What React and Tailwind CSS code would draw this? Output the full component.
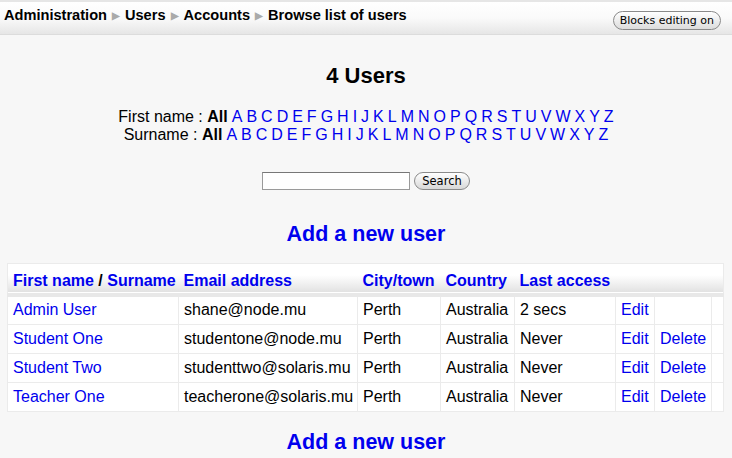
import React from 'react';

const letters = 'ABCDEFGHIJKLMNOPQRSTUVWXYZ'.split('');

const users = [
  { name: 'Admin User', email: 'shane@node.mu', city: 'Perth', country: 'Australia', last: '2 secs', del: false },
  { name: 'Student One', email: 'studentone@node.mu', city: 'Perth', country: 'Australia', last: 'Never', del: true },
  { name: 'Student Two', email: 'studenttwo@solaris.mu', city: 'Perth', country: 'Australia', last: 'Never', del: true },
  { name: 'Teacher One', email: 'teacherone@solaris.mu', city: 'Perth', country: 'Australia', last: 'Never', del: true },
];

function Arrow() {
  return <span className="mx-[5px] text-[10px] text-[#aaaaaa] relative top-[-1px]">▶</span>;
}

function LetterRow({ label }) {
  return (
    <div className="leading-[18px]">
      {label} : <b>All</b>
      {letters.map(l => (
        <a key={l} className="text-[#0000ee] ml-[4px]">{l}</a>
      ))}
    </div>
  );
}

export default function App() {
  const font = { fontFamily: '"Liberation Sans", Arial, sans-serif' };
  return (
    <div className="w-[732px] h-[458px] overflow-hidden bg-[#f7f7f7] text-black" style={font}>
      {/* Breadcrumb */}
      <div className="h-[35px] border-t-2 border-[#e6e6e6] border-b border-b-[#dcdcdc] bg-gradient-to-b from-white via-[#fafafa] to-[#e6e6e6] flex items-start justify-between px-[4px]">
        <div className="text-[14.6px] font-bold pt-[3px]">
          Administration<Arrow />Users<Arrow />Accounts<Arrow />Browse list of users
        </div>
        <button className="mt-[9px] mr-[7px] h-[19px] px-[6px] rounded-full border border-[#8a8a8a] bg-gradient-to-b from-white to-[#dcdcdc] leading-[16px] text-black" style={{ fontFamily: '"DejaVu Sans", sans-serif', fontSize: '11px' }}>
          Blocks editing on
        </button>
      </div>

      <div className="flex flex-col items-center">
        <h2 className="text-[22px] font-bold mt-[29px] leading-[24px]">4 Users</h2>
        <div className="mt-[20px] text-[16px] text-center">
          <LetterRow label="First name" />
          <LetterRow label="Surname" />
        </div>
        <div className="mt-[28px] flex items-center">
          <input className="w-[148px] h-[18px] bg-white border border-[#9a9a9a] border-t-[#777]" />
          <button className="ml-[4px] h-[18px] px-[7px] rounded-full border border-[#8a8a8a] bg-gradient-to-b from-white to-[#d8d8d8] text-[11.5px] leading-[14px]" style={{ fontFamily: '"DejaVu Sans", sans-serif' }}>
            Search
          </button>
        </div>
        <a className="mt-[31px] text-[21.5px] font-bold text-[#0000ee] leading-[26px]">Add a new user</a>
      </div>

      {/* Table */}
      <div className="px-[7px] mt-[16px]">
        <table className="w-[716px] border-collapse bg-white text-[16px] table-fixed border border-[#ebebeb]">
          <colgroup>
            <col className="w-[171px]" />
            <col className="w-[179px]" />
            <col className="w-[83px]" />
            <col className="w-[74px]" />
            <col className="w-[101px]" />
            <col className="w-[39px]" />
            <col className="w-[57px]" />
            <col className="w-[12px]" />
          </colgroup>
          <thead>
            <tr className="h-[29px] bg-gradient-to-b from-white from-40% to-[#e2e2e2] border-b-[4px] border-b-[#e8e8e8]">
              <th className="text-left font-bold text-[#0000ee] px-[5px] pt-[5px] whitespace-nowrap">
                First name <span className="text-black">/</span> Surname
              </th>
              <th className="text-left font-bold text-[#0000ee] px-[5px] pt-[5px]">Email address</th>
              <th className="text-left font-bold text-[#0000ee] px-[5px] pt-[5px] whitespace-nowrap">City/town</th>
              <th className="text-left font-bold text-[#0000ee] px-[5px] pt-[5px]">Country</th>
              <th className="text-left font-bold text-[#0000ee] px-[5px] pt-[5px] whitespace-nowrap">Last access</th>
              <th></th>
              <th></th>
              <th></th>
            </tr>
          </thead>
          <tbody>
            {users.map(u => (
              <tr key={u.name} className="h-[29px]">
                <td className="border border-[#ebebeb] px-[5px] text-[#0000ee] whitespace-nowrap">{u.name}</td>
                <td className="border border-[#ebebeb] px-[5px] whitespace-nowrap">{u.email}</td>
                <td className="border border-[#ebebeb] px-[5px]">{u.city}</td>
                <td className="border border-[#ebebeb] px-[5px]">{u.country}</td>
                <td className="border border-[#ebebeb] px-[5px]">{u.last}</td>
                <td className="border border-[#ebebeb] px-[5px] text-[#0000ee]">Edit</td>
                <td className="border border-[#ebebeb] px-[5px] text-[#0000ee]">{u.del ? 'Delete' : ''}</td>
                <td className="border border-[#ebebeb]"></td>
              </tr>
            ))}
          </tbody>
        </table>
      </div>

      <div className="flex justify-center mt-[17px]">
        <a className="text-[21.5px] font-bold text-[#0000ee] leading-[26px]">Add a new user</a>
      </div>
    </div>
  );
}
